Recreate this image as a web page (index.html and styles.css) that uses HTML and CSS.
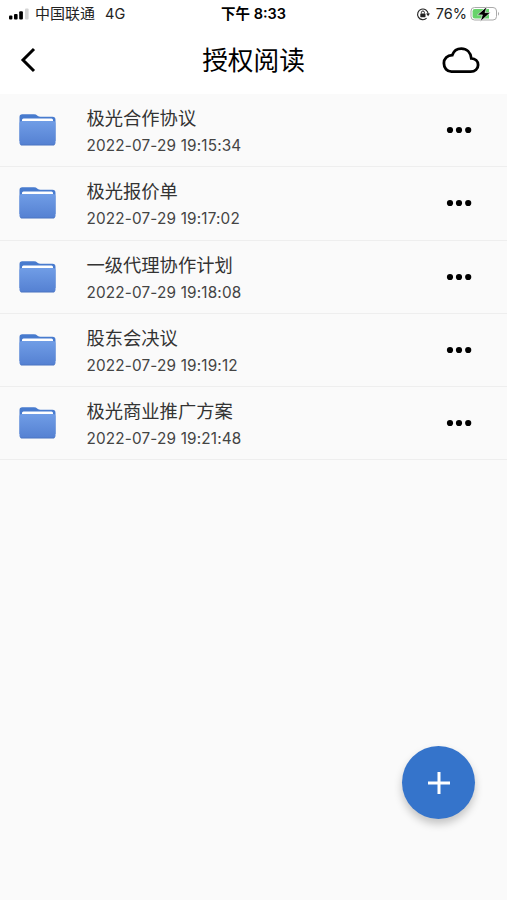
FILE: index.html
```html
<!DOCTYPE html>
<html lang="zh-CN">
  <head>
    <meta charset="utf-8" />
    <title>授权阅读</title>
    <link rel="stylesheet" href="styles.css">
  </head>
  <body>
    <!-- Folder icon shared by every row -->
    <svg class="defs" width="0" height="0">
      <defs>
        <linearGradient id="folder-front" x1="0" y1="0" x2="0" y2="1">
          <stop offset="0" stop-color="#709de6" />
          <stop offset="0.93" stop-color="#5682d3" />
          <stop offset="1" stop-color="#466fbd" />
        </linearGradient>
      </defs>
      <symbol id="folder" viewBox="0 0 37 32">
        <path d="M0.5 3Q0.5 0.3 3.2 0.3H15Q17 0.3 18.5 1.7Q19.8 2.8 21.5 2.8H33.5Q36.5 2.8 36.5 6V27H0.5Z" fill="#487bce" />
        <rect x="3" y="4.6" width="31" height="6" rx="1.5" fill="#fff" />
        <path d="M0.5 9Q0.5 7 3 7H34Q36.5 7 36.5 9V28.5Q36.5 31.6 33.5 31.6H3.5Q0.5 31.6 0.5 28.5Z" fill="url(#folder-front)" />
      </symbol>
      <symbol id="more" viewBox="0 0 26 8">
        <circle cx="4" cy="4" r="3.1" />
        <circle cx="13" cy="4" r="3.1" />
        <circle cx="22.2" cy="4" r="3.1" />
      </symbol>
    </svg>

    <div class="status">
      <div class="status-left">
        <svg class="signal" width="22" height="14" viewBox="0 0 22 14">
          <rect x="1" y="8.5" width="3.4" height="4" rx="1" />
          <rect x="6" y="7" width="3.6" height="5.5" rx="1" />
          <rect x="11.2" y="4.2" width="3.7" height="8.3" rx="1" />
          <rect x="17" y="1.5" width="3.6" height="11" rx="1" fill="#d4d4d4" />
        </svg>
        <span class="carrier">中国联通</span>
        <span class="network">4G</span>
      </div>
      <div class="status-time">下午 8:33</div>
      <div class="status-right">
        <svg class="lock" width="14" height="14" viewBox="0 0 14 14" fill="none" stroke="#222">
          <path d="M10.6 11.2A5.3 5.3 0 1 1 12.2 7" stroke-width="1.1" />
          <path d="M10.1 6.5H14L12.1 9.2Z" fill="#222" stroke="none" />
          <rect x="4.3" y="6.4" width="5.2" height="3.8" rx="0.6" fill="#222" stroke="none" />
          <path d="M5.4 6.5V5.4Q5.4 4 6.9 4Q8.4 4 8.4 5.4V6.5" />
        </svg>
        <span class="percent">76%</span>
        <svg class="battery" width="31" height="16" viewBox="0 0 31 16">
          <rect x="1" y="1.5" width="25.5" height="12.5" rx="3.5" fill="#fff" stroke="#aaa" />
          <path d="M4.8 3H19V12.5H4.8Q2.6 12.5 2.6 10.3V5.2Q2.6 3 4.8 3Z" fill="#67d36b" />
          <path d="M28 5.7Q30.2 7.7 28 9.8Z" fill="#aaa" />
          <path d="M17 0.4L7.4 8.9H12.4L10.4 15.4L20.4 6.6H15Z" stroke="#fff" stroke-width="0.6" />
        </svg>
      </div>
    </div>

    <div class="header">
      <svg class="back" width="18" height="26" viewBox="0 0 18 26">
        <path d="M15 2L4 13L15 24" />
      </svg>
      <h1>授权阅读</h1>
      <svg class="cloud" width="38" height="28" viewBox="0 0 38 28">
        <path d="M9.5 25.6H28.7C33 25.6 36.1 22.7 36.1 18.9C36.1 15.1 33.2 12.6 29.3 12.4C28.6 6.6 24.7 2.7 19.3 2.7C15 2.7 11.8 5 10.3 9.1C5.2 9.3 1.9 12.8 1.9 17.3C1.9 22.1 5 25.6 9.5 25.6Z" />
      </svg>
    </div>

    <ul class="list">
      <li>
        <svg class="folder"><use href="#folder" /></svg>
        <div class="info">
          <div class="name">极光合作协议</div>
          <div class="date">2022-07-29 19:15:34</div>
        </div>
        <svg class="more"><use href="#more" /></svg>
      </li>
      <li>
        <svg class="folder"><use href="#folder" /></svg>
        <div class="info">
          <div class="name">极光报价单</div>
          <div class="date">2022-07-29 19:17:02</div>
        </div>
        <svg class="more"><use href="#more" /></svg>
      </li>
      <li>
        <svg class="folder"><use href="#folder" /></svg>
        <div class="info">
          <div class="name">一级代理协作计划</div>
          <div class="date">2022-07-29 19:18:08</div>
        </div>
        <svg class="more"><use href="#more" /></svg>
      </li>
      <li>
        <svg class="folder"><use href="#folder" /></svg>
        <div class="info">
          <div class="name">股东会决议</div>
          <div class="date">2022-07-29 19:19:12</div>
        </div>
        <svg class="more"><use href="#more" /></svg>
      </li>
      <li>
        <svg class="folder"><use href="#folder" /></svg>
        <div class="info">
          <div class="name">极光商业推广方案</div>
          <div class="date">2022-07-29 19:21:48</div>
        </div>
        <svg class="more"><use href="#more" /></svg>
      </li>
    </ul>

    <button class="add">
      <svg width="24" height="24" viewBox="0 0 24 24">
        <path d="M12 1V23M1 12H23" />
      </svg>
    </button>
  </body>
</html>
```
FILE: styles.css
```css
* {
  box-sizing: border-box;
}
body {
  margin: 0;
  height: 100vh;
  overflow: hidden;
  background-color: #fafafa;
  color: #000;
  font-family: Inter, "Noto Sans CJK SC", sans-serif;
}
.defs {
  position: absolute;
}
.status {
  display: grid;
  grid-template-columns: 1fr auto 1fr;
  align-items: center;
  height: 28px;
  padding: 0 6px 0 8px;
  background-color: #fff;
  font-size: 15px;
  line-height: 28px;
  white-space: nowrap;
}
.status-left,
.status-right {
  display: flex;
  align-items: center;
  color: #222;
}
.status-right {
  justify-content: flex-end;
}
.signal {
  margin-right: 5px;
}
.network {
  margin-left: 10px;
  font-size: 14.5px;
}
.status-time {
  padding-right: 2px;
  font-size: 14.5px;
  font-weight: 600;
}
.percent {
  margin: 0 3px 0 6px;
  font-size: 14.5px;
}
.header {
  display: grid;
  grid-template-columns: 1fr auto 1fr;
  align-items: center;
  height: 66px;
  padding: 0 27px 2px 19px;
  background-color: #fff;
}
.header h1 {
  margin: 0;
  padding: 2px 0 0 8px;
  font-size: 25.7px;
  font-weight: 400;
  line-height: 36px;
}
.back,
.cloud {
  fill: none;
  stroke: #000;
  stroke-width: 3;
}
.cloud {
  justify-self: end;
  stroke-width: 2.8;
}
.list {
  margin: 0;
  padding: 0;
  list-style: none;
}
.list li {
  display: flex;
  align-items: center;
  height: 73.25px;
  padding: 0 35px 0 19px;
  border-bottom: 1px solid #eee;
}
.folder {
  width: 37px;
  height: 32px;
  margin-right: 30.5px;
}
.info {
  flex: 1;
  padding-top: 3px;
}
.name {
  color: #333;
  font-size: 18.3px;
  line-height: 28px;
}
.date {
  color: #444;
  font-size: 15.3px;
  letter-spacing: 0.17px;
  line-height: 27px;
}
.more {
  width: 26px;
  height: 8px;
}
/* floating over the list */
.add {
  position: absolute;
  right: 32px;
  bottom: 81px;
  display: flex;
  align-items: center;
  justify-content: center;
  width: 73px;
  height: 73px;
  padding: 0;
  border: none;
  border-radius: 50%;
  background-color: #3574cb;
  box-shadow: 0 5px 8px rgba(0, 0, 0, 0.22);
}
.add path {
  stroke: #fff;
  stroke-width: 3;
}
```
